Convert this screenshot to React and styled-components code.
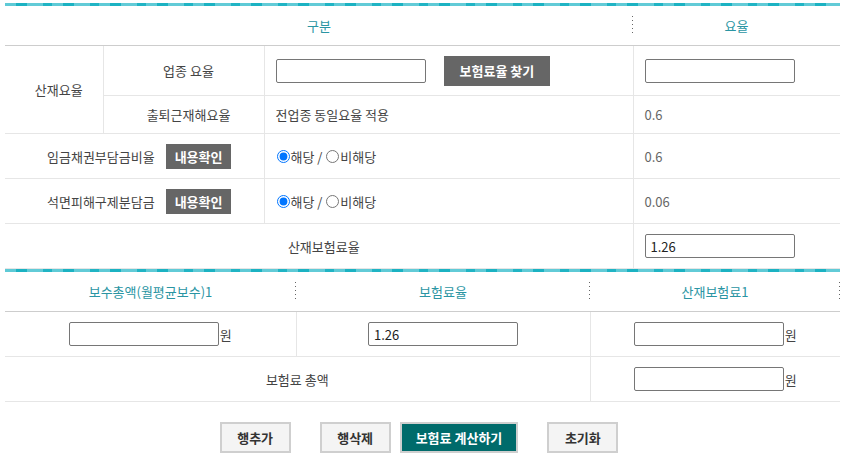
import styled, { createGlobalStyle } from "styled-components";

const GlobalStyle = createGlobalStyle`
  html, body {
    margin: 0;
    padding: 0;
    background: #fff;
  }
  body {
    font-family: "Noto Sans CJK KR", "Noto Sans", sans-serif;
    font-size: 13px;
    color: #444;
  }
`;

const Page = styled.div`
  width: 845px;
  padding: 3px 5px 0;
  box-sizing: border-box;
`;

const Stripe = styled.div`
  height: 3px;
  background: repeating-linear-gradient(
    90deg,
    #5ecad6 0 11px,
    #1bb2c2 11px 22px,
    #62cbd7 22px 38px,
    #20b4c4 38px 47px
  );
`;

const Table = styled.table`
  width: 100%;
  border-collapse: collapse;
  table-layout: fixed;
`;

const Row = styled.tr`
  height: ${(p) => p.$h || 45}px;
`;

const Th = styled.th`
  position: relative;
  height: 39px;
  padding: 0;
  font-weight: normal;
  color: #2a95a3;
  text-align: center;
  border-bottom: 1px solid #cdcdcd;

  ${(p) =>
    p.$divider &&
    `
    &::after {
      content: "";
      position: absolute;
      right: 0;
      top: 10px;
      width: 1px;
      height: 18px;
      background: repeating-linear-gradient(to bottom, #666 0 1px, transparent 1px 4px);
    }
  `}
`;

const Td = styled.td`
  padding: 0 0 0 ${(p) => (p.$pad === undefined ? (p.$center ? 10 : 11) : p.$pad)}px;
  text-align: ${(p) => (p.$center ? "center" : "left")};
  border-bottom: 1px solid #e6e6e6;
  border-left: ${(p) => (p.$first ? "none" : "1px solid #e6e6e6")};
  color: ${(p) => (p.$muted ? "#666" : "#444")};
  vertical-align: middle;
`;

const Cell = styled.div`
  display: flex;
  align-items: center;
  justify-content: ${(p) => (p.$center ? "center" : "flex-start")};
  gap: ${(p) => p.$gap || 0}px;
`;

const TextInput = styled.input`
  width: 150px;
  height: 24px;
  box-sizing: border-box;
  border: 1px solid #767676;
  border-radius: 2px;
  padding: 0 5px;
  font-family: "Noto Sans CJK KR", "Noto Sans", sans-serif;
  font-size: 13px;
  color: #222;
  background: #fff;
`;

const DarkButton = styled.button`
  height: ${(p) => (p.$small ? 25 : 30)}px;
  padding: 0 ${(p) => (p.$small ? 9 : 16)}px;
  border: none;
  background: #666;
  color: #fff;
  font-family: "Noto Sans CJK KR", "Noto Sans", sans-serif;
  font-size: 13px;
  font-weight: bold;
  cursor: pointer;
`;

const Radio = styled.label`
  display: inline-flex;
  align-items: center;
  color: #444;

  input {
    margin: 0 1px 0 1px;
    width: 13px;
    height: 13px;
  }
`;

const Won = styled.span`
  margin-left: 1px;
  color: #444;
`;

const ButtonRow = styled.div`
  display: flex;
  justify-content: center;
  padding: 20px 7px 0 0;
`;

const ActionButton = styled.button`
  height: 31px;
  min-width: 71px;
  padding: 0 14px;
  margin-left: ${(p) => p.$gap || 0}px;
  box-sizing: border-box;
  border: 2px solid #cfcfcf;
  background: ${(p) => (p.$primary ? "#006b6b" : "#f4f4f4")};
  color: ${(p) => (p.$primary ? "#fff" : "#333")};
  font-family: "Noto Sans CJK KR", "Noto Sans", sans-serif;
  font-size: 13px;
  font-weight: bold;
  cursor: pointer;
`;

function Applicable({ name }) {
  return (
    <Cell>
      <Radio>
        <input type="radio" name={name} defaultChecked />
        해당 /&nbsp;
      </Radio>
      <Radio>
        <input type="radio" name={name} />
        비해당
      </Radio>
    </Cell>
  );
}

export default function App() {
  return (
    <Page>
      <GlobalStyle />
      <Stripe />
      <Table>
        <colgroup>
          <col style={{ width: 98 }} />
          <col style={{ width: 161 }} />
          <col style={{ width: 369 }} />
          <col style={{ width: 207 }} />
        </colgroup>
        <thead>
          <tr>
            <Th colSpan={3} $divider>
              구분
            </Th>
            <Th>요율</Th>
          </tr>
        </thead>
        <tbody>
          <Row $h={50}>
            <Td rowSpan={2} $first $center>
              산재요율
            </Td>
            <Td $center>업종 요율</Td>
            <Td>
              <Cell $gap={18}>
                <TextInput />
                <DarkButton>보험료율 찾기</DarkButton>
              </Cell>
            </Td>
            <Td>
              <TextInput />
            </Td>
          </Row>
          <Row $h={38}>
            <Td $center>출퇴근재해요율</Td>
            <Td>전업종 동일요율 적용</Td>
            <Td $muted>0.6</Td>
          </Row>
          <Row>
            <Td colSpan={2} $first $center>
              <Cell $center $gap={11}>
                임금채권부담금비율
                <DarkButton $small>내용확인</DarkButton>
              </Cell>
            </Td>
            <Td>
              <Applicable name="wage" />
            </Td>
            <Td $muted>0.6</Td>
          </Row>
          <Row>
            <Td colSpan={2} $first $center>
              <Cell $center $gap={11}>
                석면피해구제분담금
                <DarkButton $small>내용확인</DarkButton>
              </Cell>
            </Td>
            <Td>
              <Applicable name="asbestos" />
            </Td>
            <Td $muted>0.06</Td>
          </Row>
          <Row>
            <Td colSpan={3} $first $center>
              산재보험료율
            </Td>
            <Td>
              <TextInput defaultValue="1.26" />
            </Td>
          </Row>
        </tbody>
      </Table>

      <Stripe />
      <Table>
        <colgroup>
          <col style={{ width: 291 }} />
          <col style={{ width: 294 }} />
          <col style={{ width: 250 }} />
        </colgroup>
        <thead>
          <tr>
            <Th $divider>보수총액(월평균보수)1</Th>
            <Th $divider>보험료율</Th>
            <Th $divider>산재보험료1</Th>
          </tr>
        </thead>
        <tbody>
          <Row>
            <Td $first $pad={0}>
              <Cell $center>
                <TextInput />
                <Won>원</Won>
              </Cell>
            </Td>
            <Td $pad={0}>
              <Cell $center>
                <TextInput defaultValue="1.26" />
              </Cell>
            </Td>
            <Td $pad={0}>
              <Cell $center>
                <TextInput />
                <Won>원</Won>
              </Cell>
            </Td>
          </Row>
          <Row>
            <Td colSpan={2} $first $center $pad={0}>
              보험료 총액
            </Td>
            <Td $pad={0}>
              <Cell $center>
                <TextInput />
                <Won>원</Won>
              </Cell>
            </Td>
          </Row>
        </tbody>
      </Table>

      <ButtonRow>
        <ActionButton>행추가</ActionButton>
        <ActionButton $gap={29}>행삭제</ActionButton>
        <ActionButton $gap={9} $primary>
          보험료 계산하기
        </ActionButton>
        <ActionButton $gap={29}>초기화</ActionButton>
      </ButtonRow>
    </Page>
  );
}
